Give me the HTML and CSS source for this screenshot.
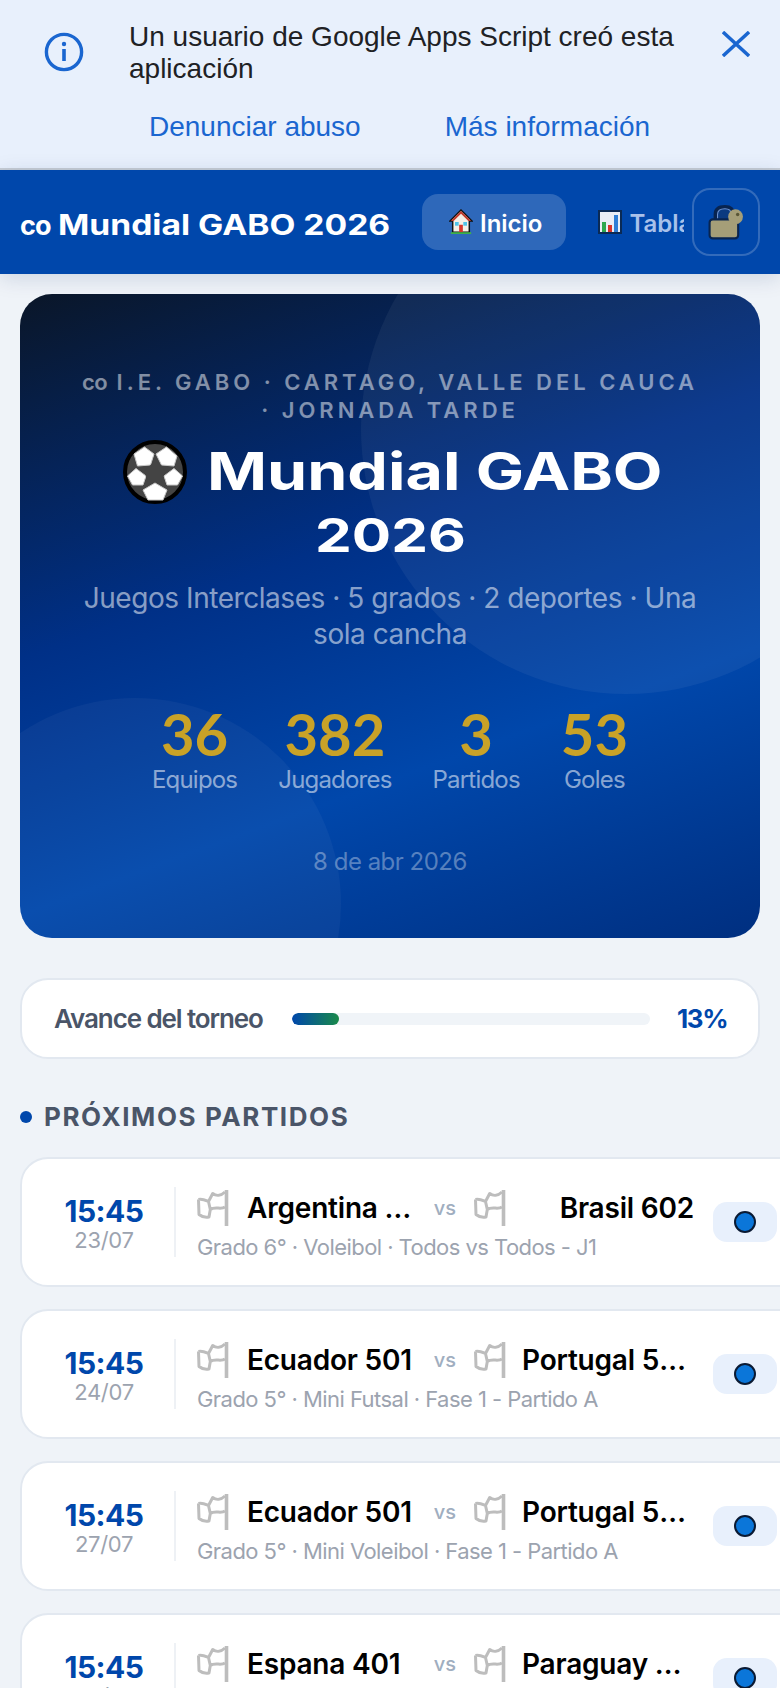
FILE: index.html
```html
<!DOCTYPE html>
<html lang="es">
<head>
<meta charset="utf-8">
<title>Mundial GABO 2026</title>
<link rel="stylesheet" href="styles.css">
</head>
<body>
<svg class="defs" width="0" height="0" aria-hidden="true">
  <defs>
    <symbol id="flag" viewBox="0 0 32 36">
      <path d="M29.5 0V36" fill="none" stroke="#bdbdbd" stroke-width="3.6"/>
      <path d="M28 2C24 6 19 6 15.7 3.5L11.5 11.5L13.3 19.5C18 16 24 20 28 17M1.5 9.5C5 8.5 8 10 11.5 11.5M1.5 9.5L2 24.5C5 27 9 27.5 12 27L13.3 19.5" fill="none" stroke="#bdbdbd" stroke-width="3" stroke-linejoin="round"/>
    </symbol>
  </defs>
</svg>

<header class="banner">
  <div class="banner-top">
    <svg class="info" viewBox="0 0 40 40" aria-hidden="true"><circle cx="20" cy="20" r="17.6" fill="none" stroke="#1a66d0" stroke-width="3.4"/><circle cx="20" cy="12" r="2.2" fill="#1a66d0"/><rect x="18.2" y="17" width="3.6" height="12" fill="#1a66d0"/></svg>
    <p class="banner-text">Un usuario de Google Apps Script creó esta aplicación</p>
    <svg class="close" viewBox="0 0 28 26" aria-hidden="true"><path d="M1 1L27 25M27 1L1 25" stroke="#1a66d0" stroke-width="3.4" fill="none"/></svg>
  </div>
  <div class="banner-links">
    <a class="banner-link">Denunciar abuso</a>
    <a class="banner-link">Más información</a>
  </div>
</header>

<nav class="topbar">
  <div class="brand"><span class="brand-cc">co</span><span class="brand-name">Mundial GABO 2026</span></div>
  <div class="tabs">
    <div class="tab tab-active">
      <svg class="tab-ico" viewBox="0 0 26 28" aria-hidden="true"><path d="M13 1L25 13H22V25H4V13H1Z" fill="#f4efe6" stroke="#111" stroke-width="1.6"/><path d="M13 2L24 13H21L13 5L5 13H2Z" fill="#c0392b"/><rect x="11" y="17" width="4" height="8" fill="#d9352a"/><rect x="6.5" y="14" width="4" height="4" fill="#4fc3e8"/><rect x="15.5" y="14" width="4" height="4" fill="#4fc3e8"/><rect x="2" y="25" width="22" height="2" fill="#3faf4a"/></svg>
      <span class="tab-text">Inicio</span>
    </div>
    <div class="tab">
      <svg class="tab-ico tab-ico-chart" viewBox="0 0 24 24" aria-hidden="true"><rect x="1" y="1" width="22" height="22" fill="#e9eef5" stroke="#0a2a55" stroke-width="2"/><rect x="4" y="12" width="4" height="10" fill="#2ea84f"/><rect x="10" y="15" width="4" height="7" fill="#d9352a"/><rect x="16" y="5" width="4" height="17" fill="#2f7fd6"/></svg>
      <span class="tab-text">Tabla de posiciones</span>
    </div>
  </div>
  <div class="lock-btn">
    <svg viewBox="0 0 34 33" width="36" height="35" aria-hidden="true"><path d="M7 15V9C7 3 11 1.7 16 1.7C21 1.7 24 3 24 9V15" fill="#0b3a80" stroke="#082450" stroke-width="3.4"/><path d="M9 14V9C9 5 12 3.5 16 3.5C20 3.5 22 5 22 9" fill="none" stroke="#6f93d0" stroke-width="1"/><rect x="1.5" y="13.5" width="27" height="18" rx="3" fill="#a59e78" stroke="#082450" stroke-width="2"/><circle cx="26" cy="11" r="7" fill="#a59e78"/><circle cx="28" cy="9" r="1.6" fill="#5a5636"/></svg>
  </div>
</nav>

<main class="content">
  <section class="hero">
    <span class="hero-circle hero-circle-a"></span>
    <span class="hero-circle hero-circle-b"></span>
    <div class="eyebrow"><span class="eyebrow-cc">co</span> I.E. GABO · CARTAGO, VALLE DEL CAUCA · JORNADA TARDE</div>
    <h1 class="hero-title">
      <span class="title-line">
        <svg class="ball" viewBox="0 0 64 64" aria-hidden="true"><circle cx="32" cy="32" r="30" fill="#444" stroke="#000" stroke-width="4"/><g fill="#fff" stroke="#c8c8c8" stroke-width="1"><path d="M11 14L21.5 7L31 14L27.5 25L14.5 26Z"/><path d="M33 14L43.5 7L54 16L51 26L38.5 25Z"/><path d="M4.5 36L13 28.5L23 36L20 45L9.5 45Z"/><path d="M59.5 36L51 28.5L41 36L44 45L54.5 45Z"/><path d="M20 50L32 43L44 50L40 60L25 60Z"/></g><path d="M32 21L43 31L38 41.5H25L21 31Z" fill="#444"/></svg>
        <span class="title-main">Mundial GABO</span>
      </span>
      <span class="title-line"><span class="title-year">2026</span></span>
    </h1>
    <p class="hero-sub">Juegos Interclases · 5 grados · 2 deportes · Una sola cancha</p>
    <div class="stats">
      <div class="stat"><div class="stat-num">36</div><div class="stat-label">Equipos</div></div>
      <div class="stat"><div class="stat-num">382</div><div class="stat-label">Jugadores</div></div>
      <div class="stat"><div class="stat-num">3</div><div class="stat-label">Partidos</div></div>
      <div class="stat"><div class="stat-num">53</div><div class="stat-label">Goles</div></div>
    </div>
    <div class="hero-date">8 de abr 2026</div>
  </section>

  <section class="progress">
    <span class="progress-label">Avance del torneo</span>
    <div class="track"><div class="fill" style="width:13%"></div></div>
    <span class="progress-pct">13%</span>
  </section>

  <h2 class="section-title"><span class="section-dot"></span>PRÓXIMOS PARTIDOS</h2>

  <div class="matches">
    <article class="match">
      <div class="when"><div class="time">15:45</div><div class="date">23/07</div></div>
      <div class="info-col">
        <div class="teams">
          <svg class="flag"><use href="#flag"/></svg><span class="team">Argentina 601</span>
          <span class="vs">vs</span>
          <svg class="flag"><use href="#flag"/></svg><span class="team team-right">Brasil 602</span>
        </div>
        <div class="meta">Grado 6° · Voleibol · Todos vs Todos - J1</div>
      </div>
      <div class="badge"><span class="badge-dot"></span></div>
    </article>
    <article class="match">
      <div class="when"><div class="time">15:45</div><div class="date">24/07</div></div>
      <div class="info-col">
        <div class="teams">
          <svg class="flag"><use href="#flag"/></svg><span class="team">Ecuador 501</span>
          <span class="vs">vs</span>
          <svg class="flag"><use href="#flag"/></svg><span class="team team-right">Portugal 502</span>
        </div>
        <div class="meta">Grado 5° · Mini Futsal · Fase 1 - Partido A</div>
      </div>
      <div class="badge"><span class="badge-dot"></span></div>
    </article>
    <article class="match">
      <div class="when"><div class="time">15:45</div><div class="date">27/07</div></div>
      <div class="info-col">
        <div class="teams">
          <svg class="flag"><use href="#flag"/></svg><span class="team">Ecuador 501</span>
          <span class="vs">vs</span>
          <svg class="flag"><use href="#flag"/></svg><span class="team team-right">Portugal 502</span>
        </div>
        <div class="meta">Grado 5° · Mini Voleibol · Fase 1 - Partido A</div>
      </div>
      <div class="badge"><span class="badge-dot"></span></div>
    </article>
    <article class="match">
      <div class="when"><div class="time">15:45</div><div class="date">30/07</div></div>
      <div class="info-col">
        <div class="teams">
          <svg class="flag"><use href="#flag"/></svg><span class="team">Espana 401</span>
          <span class="vs">vs</span>
          <svg class="flag"><use href="#flag"/></svg><span class="team team-right">Paraguay 402</span>
        </div>
        <div class="meta">Grado 4° · Mini Futsal · Fase 1 - Partido A</div>
      </div>
      <div class="badge"><span class="badge-dot"></span></div>
    </article>
  </div>
</main>
</body>
</html>
```
FILE: styles.css
```css
* { box-sizing: border-box; }
html, body { margin: 0; padding: 0; height: 1688px; overflow: hidden; }
body { background: #eff3f8; font-family: "Inter", "Liberation Sans", sans-serif; color: #000; width: 780px; }
.defs { display: block; height: 0; }

.banner { background: #e8f0fc; height: 170px; border-bottom: 2px solid #c6ccd4; padding: 21px 0 0 44px; }
.banner-top { display: flex; align-items: flex-start; }
.info { width: 40px; height: 40px; margin-top: 11px; flex: none; }
.banner-text { margin: 0 0 0 45px; width: 552px; font: 400 28px/32px "Liberation Sans", sans-serif; color: #202124; }
.close { width: 28px; height: 26px; margin: 10px 0 0 41px; flex: none; }
.banner-links { display: flex; margin: 26px 0 0 105px; gap: 84px; }
.banner-link { font: 400 28px/32px "Liberation Sans", sans-serif; color: #1a66d0; }

.topbar { position: relative; height: 104px; background: #0047ab; box-shadow: 0 4px 20px rgba(0,40,100,.15); display: flex; align-items: center; padding: 0 20px; }
.brand { display: flex; align-items: baseline; gap: 8px; font: 700 28px/36px "Inter", sans-serif; color: #fff; white-space: nowrap; width: 402px; flex: none; margin-top: 6px; }
.brand-cc { font-size: 27px; letter-spacing: -1px; }
.brand-name { display: inline-block; width: 280px; transform: scaleX(1.2); transform-origin: left center; }
.tabs { display: flex; gap: 5px; width: 262px; overflow: hidden; flex: none; align-items: center; }
.tab { display: flex; align-items: center; gap: 7px; height: 56px; padding: 0 24px 0 27px; border-radius: 16px; color: #a9c1ea; font: 600 24px/1 "Inter", sans-serif; white-space: nowrap; flex: none; }
.tab-active { background: rgba(255,255,255,.18); color: #fff; }
.tab-text { padding-top: 3px; }
.tab-ico { width: 24px; height: 26px; flex: none; }
.tab-ico-chart { height: 24px; }
.lock-btn { position: absolute; right: 20px; top: 18px; width: 68px; height: 68px; border: 2px solid rgba(255,255,255,.2); border-radius: 18px; background: #0047ab; display: flex; align-items: center; justify-content: center; }

.content { padding: 20px 0 0 20px; }
.hero { position: relative; overflow: hidden; width: 740px; height: 644px; border-radius: 32px; background: linear-gradient(160deg, #0a1628 0%, #003087 40%, #0047ab 68%, #002f80 100%); padding: 74px 40px 0; text-align: center; }
.hero-circle { position: absolute; border-radius: 50%; background: rgba(255,255,255,.05); }
.hero-circle-a { width: 530px; height: 530px; left: 341px; top: -130px; }
.hero-circle-b { width: 412px; height: 412px; left: -91px; top: 404px; background: rgba(255,255,255,.04); }
.eyebrow { position: relative; margin: 0 12px; font: 600 22px/28px "Inter", sans-serif; letter-spacing: 3.97px; color: rgba(255,255,255,.5); }
.eyebrow-cc { letter-spacing: -.5px; }
.hero-title { position: relative; margin: 16px 0 0; font: 700 52px/64px "Inter", sans-serif; color: #fff; }
.title-line { display: flex; justify-content: center; align-items: center; height: 63px; }
.ball { width: 64px; height: 64px; margin: 0 20px 0 4px; flex: none; }
.title-main { display: inline-block; width: 455px; text-align: left; white-space: nowrap; transform: scaleX(1.24); transform-origin: left center; }
.title-year { display: inline-block; width: 150px; text-align: left; font-size: 46px; transform: scaleX(1.27); transform-origin: left center; }
.hero-sub { position: relative; margin: 14px 20px 0; font: 400 28px/36px "Inter", sans-serif; letter-spacing: -.45px; color: rgba(255,255,255,.55); }
.stats { position: relative; display: flex; justify-content: center; gap: 41px; margin-top: 52px; }
.stat { text-align: center; }
.stat-num { font: 700 58px/60px "Lato", sans-serif; color: #c9a227; }
.stat-label { margin-top: 2px; font: 400 24px/28px "Inter", sans-serif; letter-spacing: -.8px; color: rgba(255,255,255,.55); }
.hero-date { position: relative; margin-top: 54px; font: 400 24px/28px "Inter", sans-serif; letter-spacing: -.5px; color: rgba(255,255,255,.35); }

.progress { display: flex; align-items: center; width: 740px; height: 81px; margin: 40px 0 0 0; padding: 0 32px; background: #fff; border: 2px solid #e2e8f0; border-radius: 28px; }
.progress-label { font: 600 26px/1 "Inter", sans-serif; letter-spacing: -1.1px; color: #4a5568; width: 238px; flex: none; white-space: nowrap; }
.track { width: 358px; height: 12px; border-radius: 6px; background: #f0f4f8; flex: none; overflow: hidden; }
.fill { height: 100%; border-radius: 6px; background: linear-gradient(90deg, #0047ab, #1a8a4a); }
.progress-pct { margin-left: 27px; font: 700 26px/1 "Inter", sans-serif; letter-spacing: -1.4px; color: #0047ab; }

.section-title { display: flex; align-items: center; gap: 12px; margin: 40px 0 0; font: 700 26px/36px "Inter", sans-serif; letter-spacing: 1.6px; color: #4a5568; }
.section-dot { width: 12px; height: 12px; border-radius: 50%; background: #0047ab; flex: none; }

.matches { display: flex; flex-direction: column; gap: 22px; margin-top: 22px; }
.match { display: flex; align-items: center; width: 800px; height: 130px; background: #fff; border: 2px solid #e2e8f0; border-radius: 28px; flex: none; }
.when { width: 154px; height: 70px; border-right: 2px solid #eef1f5; text-align: center; flex: none; padding: 6px 0 0 12px; }
.time { font: 700 30px/36px "Inter", sans-serif; letter-spacing: -.5px; color: #0047ab; }
.date { font: 400 22px/22px "Inter", sans-serif; letter-spacing: -.3px; color: #9ca3af; }
.info-col { margin-left: 21px; width: 497px; flex: none; padding-top: 7px; }
.teams { display: flex; align-items: center; height: 36px; }
.flag { width: 32px; height: 36px; flex: none; }
.team { margin-left: 18px; width: 172px; font: 600 28px/36px "Inter", sans-serif; letter-spacing: -.2px; color: #000; white-space: nowrap; overflow: hidden; text-overflow: ellipsis; flex: none; }
.team-right { text-align: right; margin-left: 16px; }
.vs { width: 40px; margin: 0 9px 0 6px; font: 500 20px/1 "Inter", sans-serif; color: #a0aec0; text-align: center; flex: none; }
.meta { margin-top: 6px; font: 400 22px/30px "Inter", sans-serif; letter-spacing: -.55px; color: #9ca3af; white-space: nowrap; }
.badge { width: 64px; height: 40px; margin-left: 19px; background: #e8f0fc; border-radius: 14px; display: flex; align-items: center; justify-content: center; flex: none; }
.badge-dot { width: 22px; height: 22px; border-radius: 50%; background: #0b76d9; border: 2px solid #0a1a33; }
```
